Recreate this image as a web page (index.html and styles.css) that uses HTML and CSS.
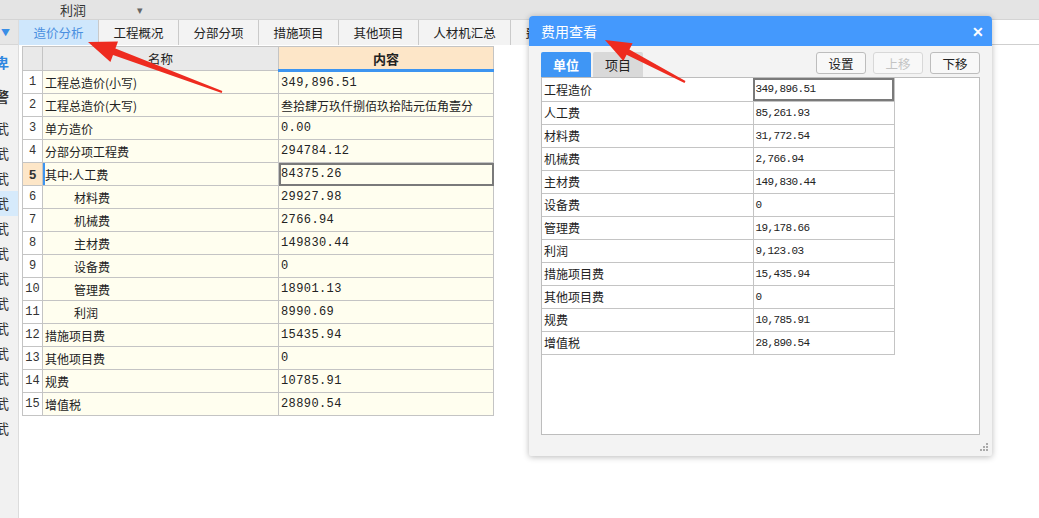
FILE: index.html
```html
<!DOCTYPE html>
<html lang="zh">
<head>
<meta charset="utf-8">
<link rel="stylesheet" href="styles.css">
</head>
<body>
<div class="app">
  <div class="topbar">
    <span class="top-label">利润</span>
    <span class="top-caret">▾</span>
  </div>
  <div class="body">
    <aside class="side">
      <div class="side-drop">▼</div>
      <div class="side-list">
        <div class="side-item blue">卑</div>
        <div class="side-item bold">警</div>
        <div class="side-item">武</div>
        <div class="side-item">武</div>
        <div class="side-item">武</div>
        <div class="side-item sel">武</div>
        <div class="side-item">武</div>
        <div class="side-item">武</div>
        <div class="side-item">武</div>
        <div class="side-item">武</div>
        <div class="side-item">武</div>
        <div class="side-item">武</div>
        <div class="side-item">武</div>
        <div class="side-item">武</div>
        <div class="side-item">武</div>
      </div>
    </aside>
    <main class="work">
      <nav class="tabs">
        <div class="tab active">造价分析</div>
        <div class="tab">工程概况</div>
        <div class="tab">分部分项</div>
        <div class="tab">措施项目</div>
        <div class="tab">其他项目</div>
        <div class="tab wide">人材机汇总</div>
        <div class="tab">费用汇总</div>
      </nav>
      <table class="grid">
        <colgroup><col class="c-idx"><col class="c-name"><col class="c-val"></colgroup>
        <thead>
          <tr><th class="h-idx"></th><th class="h-name">名称</th><th class="h-val">内容</th></tr>
        </thead>
        <tbody>
          <tr><td class="idx">1</td><td class="name">工程总造价(小写)</td><td class="val">349,896.51</td></tr>
          <tr><td class="idx">2</td><td class="name">工程总造价(大写)</td><td class="val cjk">叁拾肆万玖仟捌佰玖拾陆元伍角壹分</td></tr>
          <tr><td class="idx">3</td><td class="name">单方造价</td><td class="val">0.00</td></tr>
          <tr><td class="idx">4</td><td class="name">分部分项工程费</td><td class="val">294784.12</td></tr>
          <tr class="cur"><td class="idx">5</td><td class="name">其中:人工费</td><td class="val">84375.26</td></tr>
          <tr><td class="idx">6</td><td class="name sub">材料费</td><td class="val">29927.98</td></tr>
          <tr><td class="idx">7</td><td class="name sub">机械费</td><td class="val">2766.94</td></tr>
          <tr><td class="idx">8</td><td class="name sub">主材费</td><td class="val">149830.44</td></tr>
          <tr><td class="idx">9</td><td class="name sub">设备费</td><td class="val">0</td></tr>
          <tr><td class="idx">10</td><td class="name sub">管理费</td><td class="val">18901.13</td></tr>
          <tr><td class="idx">11</td><td class="name sub">利润</td><td class="val">8990.69</td></tr>
          <tr><td class="idx">12</td><td class="name">措施项目费</td><td class="val">15435.94</td></tr>
          <tr><td class="idx">13</td><td class="name">其他项目费</td><td class="val">0</td></tr>
          <tr><td class="idx">14</td><td class="name">规费</td><td class="val">10785.91</td></tr>
          <tr><td class="idx">15</td><td class="name">增值税</td><td class="val">28890.54</td></tr>
        </tbody>
      </table>
    </main>
  </div>

  <section class="dialog">
    <header class="dlg-title">
      <span>费用查看</span>
      <span class="dlg-close">✕</span>
    </header>
    <div class="dlg-body">
      <div class="dlg-toolbar">
        <div class="dlg-tabs">
          <div class="dtab on">单位</div>
          <div class="dtab">项目</div>
        </div>
        <div class="dlg-btns">
          <button class="btn">设置</button>
          <button class="btn off">上移</button>
          <button class="btn">下移</button>
        </div>
      </div>
      <div class="dlg-grid">
        <table class="fees">
          <colgroup><col class="f-name"><col class="f-val"></colgroup>
          <tr class="cur"><td>工程造价</td><td class="val">349,896.51</td></tr>
          <tr><td>人工费</td><td class="val">85,261.93</td></tr>
          <tr><td>材料费</td><td class="val">31,772.54</td></tr>
          <tr><td>机械费</td><td class="val">2,766.94</td></tr>
          <tr><td>主材费</td><td class="val">149,830.44</td></tr>
          <tr><td>设备费</td><td class="val">0</td></tr>
          <tr><td>管理费</td><td class="val">19,178.66</td></tr>
          <tr><td>利润</td><td class="val">9,123.03</td></tr>
          <tr><td>措施项目费</td><td class="val">15,435.94</td></tr>
          <tr><td>其他项目费</td><td class="val">0</td></tr>
          <tr><td>规费</td><td class="val">10,785.91</td></tr>
          <tr><td>增值税</td><td class="val">28,890.54</td></tr>
        </table>
      </div>
      <div class="dlg-foot">
        <svg class="grip" width="8" height="8" viewBox="0 0 8 8">
          <rect x="6" y="0" width="2" height="2" fill="#aaa"/>
          <rect x="3" y="3" width="2" height="2" fill="#aaa"/>
          <rect x="6" y="3" width="2" height="2" fill="#aaa"/>
          <rect x="0" y="6" width="2" height="2" fill="#aaa"/>
          <rect x="3" y="6" width="2" height="2" fill="#aaa"/>
          <rect x="6" y="6" width="2" height="2" fill="#aaa"/>
        </svg>
      </div>
    </div>
  </section>

  <svg class="arrows" width="1039" height="518" viewBox="0 0 1039 518">
    <polygon fill="#ee2b1f" points="88,42 118,41.5 115.4,48.5 222.3,91.1 221.7,92.9 113,55.1 110.4,62.1"/>
    <polygon fill="#ee2b1f" points="605,40 632.6,43.2 629.4,49.4 685.5,81.1 684.5,82.9 626.6,54.8 623.4,61"/>
  </svg>
</div>
</body>
</html>
```

FILE: styles.css
```css
* { box-sizing: border-box; }
html, body { margin: 0; padding: 0; }
body {
  width: 1039px;
  height: 518px;
  overflow: hidden;
  background: #fff;
  font-family: "Noto Sans CJK SC", "Liberation Sans", sans-serif;
  font-size: 12px;
  color: #222;
}
.app { position: relative; width: 1039px; height: 518px; }

.topbar {
  height: 20px;
  background: #e4e4e4;
  border-bottom: 1px solid #d4d4d4;
  display: flex;
  align-items: center;
  font-size: 13px;
  line-height: 1;
}
.top-label { margin-left: 60px; color: #333; }
.top-caret { margin-left: 51px; color: #666; font-size: 11px; }

.body { display: flex; height: 498px; }

.side {
  width: 19px;
  background: #f1f1f1;
  border-right: 1px solid #dcdcdc;
  display: flex;
  flex-direction: column;
  overflow: hidden;
}
.side-drop {
  height: 25px;
  background: #e6e6e6;
  color: #3a8ee6;
  font-size: 9px;
  display: flex;
  align-items: center;
  padding-left: 1px;
  border-bottom: 1px solid #d6d6d6;
}
.side-list { padding-top: 4px; }
.side-item {
  height: 25px;
  line-height: 25px;
  font-size: 14px;
  text-indent: -5px;
  overflow: hidden;
  white-space: nowrap;
  color: #333;
}
.side-item.blue { color: #2e86e0; font-weight: bold; height: 32px; line-height: 26px; }
.side-item.bold { font-weight: bold; height: 32px; line-height: 30px; margin-bottom: 3px; }
.side-item.sel { background: #d6eafb; }

.work { flex: 1; display: flex; flex-direction: column; }

.tabs {
  height: 25px;
  display: flex;
  border-bottom: 1px solid #cfcfcf;
}
.tab {
  width: 80px;
  height: 25px;
  background: #f3f3f3;
  border-right: 1px solid #cacaca;
  display: flex;
  align-items: center;
  justify-content: center;
  font-size: 12.5px;
  color: #222;
}
.tab.wide { width: 92px; }
.tab.active { background: #cfe7fc; color: #4a8fe0; }

.grid {
  margin: 1px 0 0 3px;
  border-collapse: collapse;
  table-layout: fixed;
  width: 471px;
  font-size: 12px;
}
.c-idx { width: 20px; }
.c-name { width: 236px; }
.c-val { width: 215px; }
.grid th {
  height: 24px;
  border: 1px solid #c4c4c4;
  font-weight: normal;
  background: #e9e9e9;
  padding: 0;
  font-size: 12.5px;
}
.grid th.h-val {
  background: #fde6c8;
  font-weight: bold;
  font-size: 13px;
  border-bottom: 3px solid #3d95f0;
}
.grid td {
  height: 23px;
  border: 1px solid #c4c4c4;
  padding: 0 2px;
  white-space: nowrap;
  overflow: hidden;
  background: #fffeef;
}
.grid td.idx {
  background: #fff;
  text-align: center;
  padding: 0;
  font-family: "Liberation Mono", monospace;
  font-size: 12px;
  color: #333;
}
.grid td.name.sub { padding-left: 31px; }
.grid td.val {
  font-family: "Liberation Mono", "Noto Sans CJK SC", monospace;
  font-size: 12px;
  letter-spacing: 0.4px;
}
.grid td.val.cjk { font-family: "Noto Sans CJK SC", sans-serif; font-size: 12px; letter-spacing: 0; }
.grid tr.cur td.idx { background: #fde6c8; font-weight: bold; font-family: "Liberation Sans", sans-serif; font-size: 13px; }
.grid tr.cur td.name { box-shadow: inset 2px 0 0 #3d95f0; }
.grid tr.cur td.val { outline: 2px solid #7a7a7a; outline-offset: -2px; }

.dialog {
  position: absolute;
  left: 529px;
  top: 16px;
  width: 463px;
  height: 440px;
  background: #f3f3f3;
  border-radius: 4px 4px 2px 2px;
  box-shadow: 0 1px 6px rgba(0,0,0,0.28);
  display: flex;
  flex-direction: column;
  overflow: hidden;
}
.dlg-title {
  height: 30px;
  background: #4499fd;
  color: #fff;
  font-size: 14px;
  display: flex;
  align-items: center;
  justify-content: space-between;
  padding: 0 8px 0 12px;
}
.dlg-close { font-weight: bold; font-size: 14px; }
.dlg-body { flex: 1; display: flex; flex-direction: column; padding: 6px 12px 0 12px; }
.dlg-toolbar { display: flex; justify-content: space-between; align-items: flex-start; height: 25px; }
.dlg-tabs { display: flex; gap: 2px; }
.dtab {
  width: 50px;
  height: 25px;
  background: #d9d9d9;
  display: flex;
  align-items: center;
  justify-content: center;
  font-size: 13px;
  border-radius: 2px 2px 0 0;
}
.dtab.on { background: #3f96f5; color: #fff; font-weight: bold; }
.dlg-btns { display: flex; gap: 7px; }
.btn {
  width: 50px;
  height: 22px;
  border: 1px solid #bdbdbd;
  border-radius: 3px;
  background: #f8f8f8;
  font-family: "Noto Sans CJK SC", sans-serif;
  font-size: 12.5px;
  color: #222;
  padding: 0;
}
.btn.off { color: #c4c4c4; border-color: #d8d8d8; }
.dlg-grid {
  height: 358px;
  background: #fff;
  border: 1px solid #bdbdbd;
}
.fees { border-collapse: collapse; table-layout: fixed; width: 352px; font-size: 12px; }
.f-name { width: 211px; }
.f-val { width: 141px; }
.fees td {
  height: 23px;
  border: 1px solid #c4c4c4;
  border-top: none;
  padding: 0 2px;
  white-space: nowrap;
}
.fees tr td:first-child { border-left: none; }
.fees td.val { font-family: "Liberation Mono", monospace; font-size: 11px; letter-spacing: -0.6px; }
.fees tr.cur td.val { outline: 2px solid #7a7a7a; outline-offset: -2px; }
.dlg-foot { flex: 1; display: flex; justify-content: flex-end; align-items: flex-end; padding: 0 0 5px 0; margin-right: -8px; }

.arrows { position: absolute; left: 0; top: 0; pointer-events: none; }
```
